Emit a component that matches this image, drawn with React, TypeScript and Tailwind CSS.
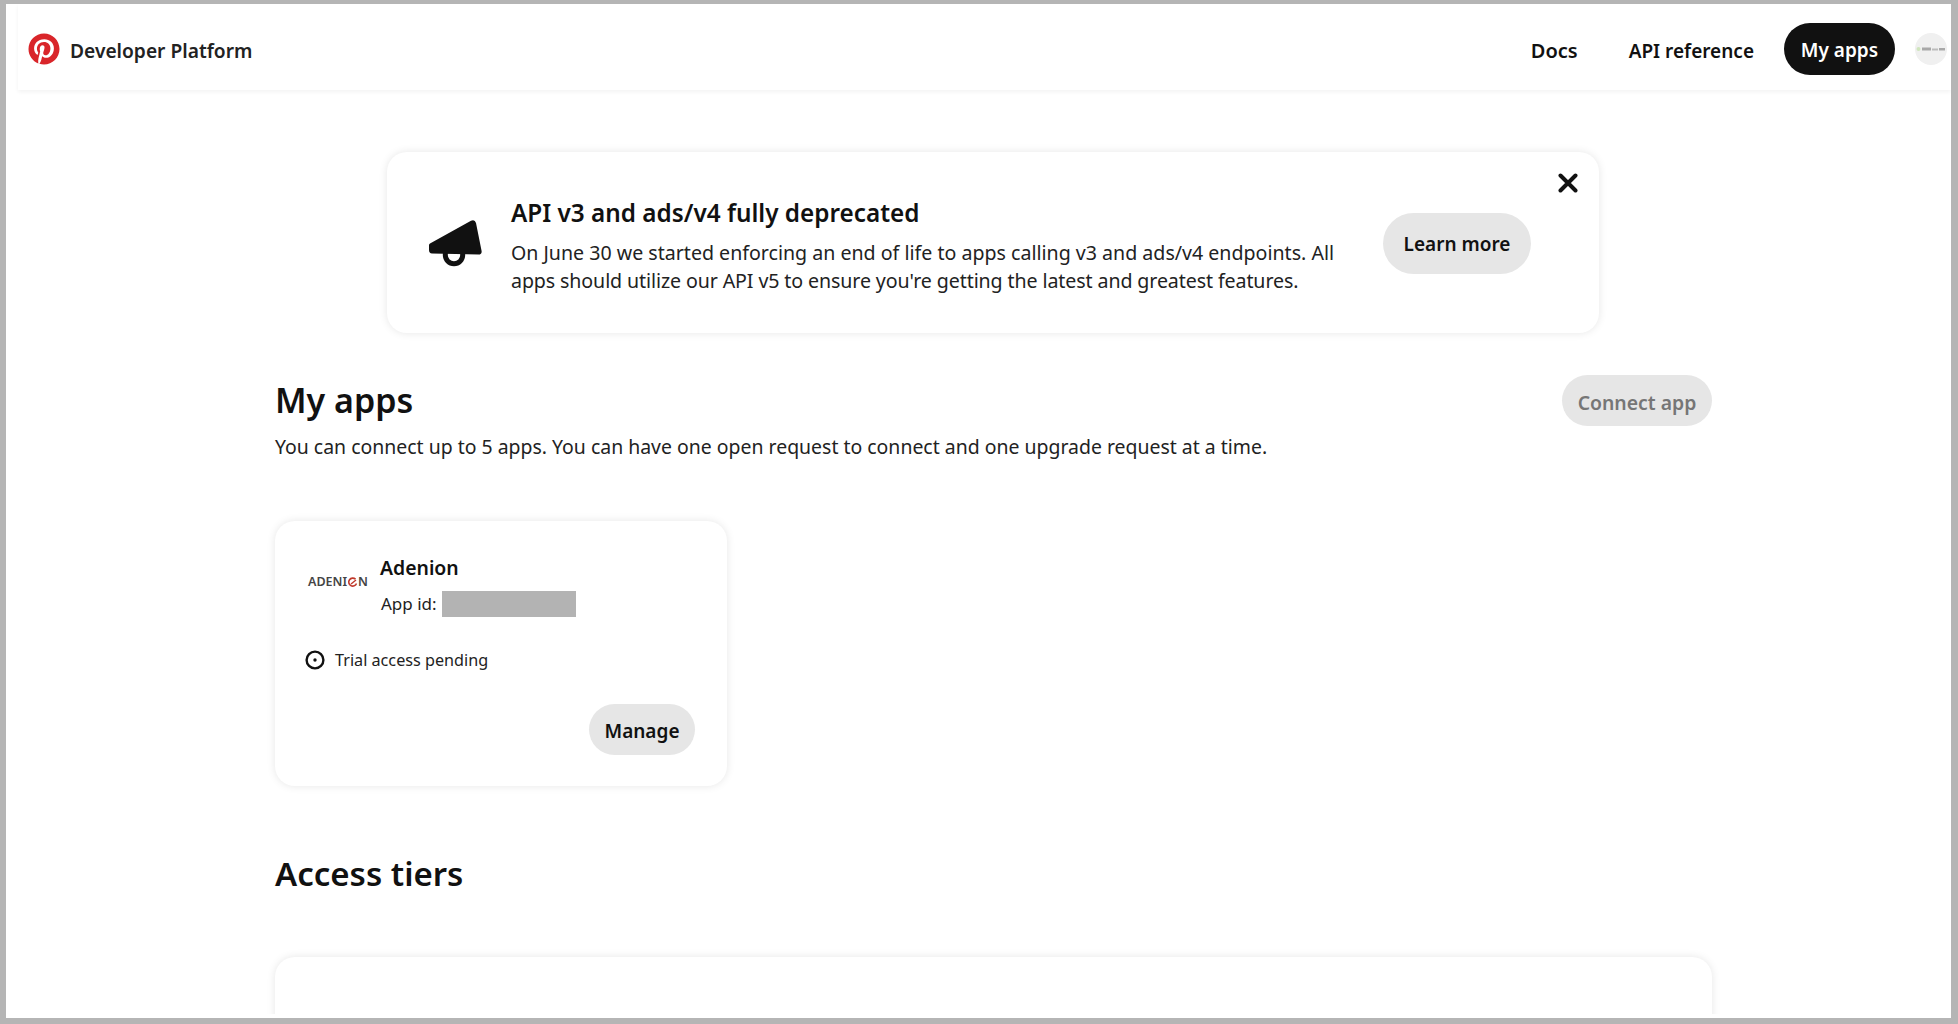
import { FaPinterest } from "react-icons/fa";

function Megaphone() {
  return (
    <svg width="53" height="48" viewBox="0 0 53 48" className="text-[#111111]">
      <circle cx="25" cy="35" r="8.7" fill="none" stroke="currentColor" strokeWidth="5" />
      <path
        d="M1 23.5 L42 0.7 Q46 -0.8 47 3 L52.6 31 Q53 34.5 49.5 34.5 L3 33.5 Q0 33.3 0 30 L0 25 Q0 24 1 23.5 Z"
        fill="currentColor"
      />
    </svg>
  );
}

function CloseIcon() {
  return (
    <svg width="20" height="20" viewBox="0 0 20 20">
      <path d="M2.5 2.5 L17.5 17.5 M17.5 2.5 L2.5 17.5" stroke="#111111" strokeWidth="4" strokeLinecap="round" />
    </svg>
  );
}

function PendingIcon() {
  return (
    <svg width="20" height="20" viewBox="0 0 20 20">
      <circle cx="10" cy="10" r="8.4" fill="none" stroke="#111111" strokeWidth="2.4" />
      <circle cx="10" cy="10" r="1.7" fill="#111111" />
    </svg>
  );
}

function AdenionLogo() {
  return (
    <div className="flex w-[61px] items-center text-[12.5px] leading-none font-semibold text-[#444444]">
      <span>ADENI</span>
      <svg width="11" height="11" viewBox="0 0 11 11" className="shrink-0">
        <path d="M8.5 2.2 A4 4 0 1 0 9.5 6.5" fill="none" stroke="#c0392b" strokeWidth="1.6" />
        <path d="M4 7 L9 3" stroke="#c0392b" strokeWidth="1.4" />
      </svg>
      <span>N</span>
    </div>
  );
}

function Avatar() {
  return (
    <div className="flex h-8 w-8 items-center justify-center rounded-full bg-[#f0f0f0]">
      <svg width="30" height="6" viewBox="0 0 30 6">
        <circle cx="2.5" cy="3" r="2" fill="#cfe5bd" />
        <rect x="6" y="1.5" width="9" height="3" fill="#a8a8a8" />
        <rect x="16" y="2.5" width="6" height="2" fill="#bcbcbc" />
        <rect x="23" y="2" width="6" height="2.5" fill="#a8a8a8" />
      </svg>
    </div>
  );
}

function PillButton({ label, className }: { label: string; className: string }) {
  return (
    <button className={`rounded-full bg-[#e6e6e6] font-semibold ${className}`}>{label}</button>
  );
}

export default function App() {
  return (
    <div
      className="h-screen overflow-hidden border-t-[4px] border-r-[7px] border-b-[6px] border-l-[6px] border-[#b5b5b5] bg-white text-[#111111]"
      style={{ fontFamily: '"Noto Sans", sans-serif' }}
    >
      <div className="flex h-[1010px] flex-col overflow-hidden">
        <header className="ml-[12px] flex h-[86px] shrink-0 items-center justify-between pt-[4px] pr-1 pl-[10px] shadow-[0_2px_4px_rgba(0,0,0,0.05)]">
          <div className="flex items-center gap-[10px]">
            <FaPinterest className="text-[32px] text-[#d9252a]" />
            <span className="pt-[4px] text-[19.2px] font-semibold text-[#222222]">Developer Platform</span>
          </div>
          <nav className="flex items-center text-[19px] font-semibold">
            <a className="mr-[51px] pt-[4px] text-[20px]">Docs</a>
            <a className="mr-[30px] pt-[4px]">API reference</a>
            <a className="mr-5 flex h-[52px] w-[111px] items-center justify-center rounded-full bg-[#111111] pt-[3px] text-white">
              My apps
            </a>
            <Avatar />
          </nav>
        </header>

        <main className="ml-[269px] w-[1437px] flex-1 pt-[62px]">
          <section className="ml-[112px] flex h-[181px] w-[1212px] rounded-[20px] pt-[21px] pr-[21px] pl-[42px] shadow-[0_0_8px_rgba(0,0,0,0.1)]">
            <div className="mt-[47px] shrink-0">
              <Megaphone />
            </div>
            <div className="mt-[22px] ml-[29px] w-[840px] shrink-0">
              <h2 className="text-[24.3px] leading-[36px] font-semibold">API v3 and ads/v4 fully deprecated</h2>
              <p className="mt-[8px] text-[19.6px] leading-[27.5px] text-[#222222]">
                On June 30 we started enforcing an end of life to apps calling v3 and ads/v4 endpoints. All
                <br />
                <span className="tracking-[-0.1px]">
                  apps should utilize our API v5 to ensure you're getting the latest and greatest features.
                </span>
              </p>
            </div>
            <PillButton label="Learn more" className="mt-[40px] ml-[32px] h-[61px] w-[148px] pt-[2px] text-[19px]" />
            <div className="ml-[27px] shrink-0">
              <CloseIcon />
            </div>
          </section>

          <div className="mt-[42px] flex items-center justify-between">
            <h1 className="text-[34px] leading-[51px] font-semibold">My apps</h1>
            <PillButton label="Connect app" className="h-[51px] w-[150px] pt-[4px] text-[19.4px] text-[#767676]" />
          </div>
          <p className="mt-[8px] text-[19.45px] leading-[26px] text-[#222222]">
            You can connect up to 5 apps. You can have one open request to connect and one upgrade request at a time.
          </p>

          <section className="mt-[61px] h-[265px] w-[452px] rounded-[20px] pt-[32px] pr-[32px] pl-[30px] shadow-[0_0_8px_rgba(0,0,0,0.1)]">
            <div className="flex">
              <div className="mt-[23px] ml-[3px] shrink-0">
                <AdenionLogo />
              </div>
              <div className="ml-[11px]">
                <div className="text-[19.4px] leading-[30px] font-semibold">Adenion</div>
                <div className="mt-[8px] flex items-center text-[17px] leading-[26px] text-[#222222]">
                  <span className="w-[62px] pl-px">App id:</span>
                  <span className="h-[26px] w-[134px] bg-[#b3b3b3]" />
                </div>
              </div>
            </div>
            <div className="mt-[30px] flex items-center gap-[10px] text-[16.2px] leading-[26px] text-[#222222]">
              <PendingIcon />
              <span>Trial access pending</span>
            </div>
            <div className="mt-[31px] flex justify-end">
              <PillButton label="Manage" className="h-[51px] w-[106px] pt-[3px] text-[19px]" />
            </div>
          </section>

          <h1 className="mt-[66px] text-[33px] leading-[44px] font-semibold">Access tiers</h1>
          <section className="mt-[61px] h-[200px] rounded-[20px] shadow-[0_0_8px_rgba(0,0,0,0.1)]" />
        </main>
      </div>
    </div>
  );
}
